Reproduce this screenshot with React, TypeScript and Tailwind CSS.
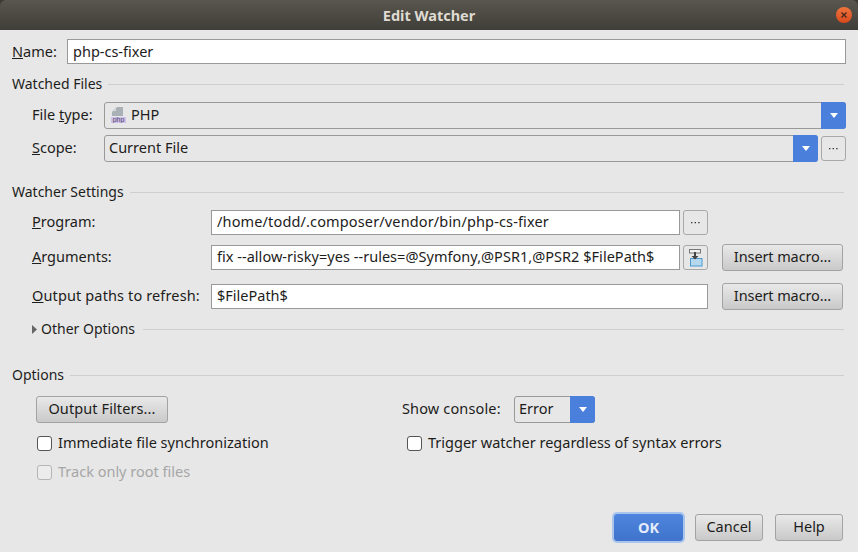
const font = "font-['Noto_Sans',sans-serif]";

const Caret = () => (
  <svg width="10" height="7" viewBox="0 0 10 7">
    <path d="M1 1h8L5 6z" fill="#fff" />
  </svg>
);

const Section = ({ title, className }: { title: string; className: string }) => (
  <div className={`flex h-[18px] items-center pr-[2px] ${className}`}>
    <span className="text-[14px] text-[#1d1d1b]">{title}</span>
    <div className="ml-[6px] h-px flex-1 bg-[#cfcfcf]" />
  </div>
);

const TextInput = ({ value, className, pad = "pb-[3px]" }: { value: string; className: string; pad?: string }) => (
  <div className={`flex h-[25px] items-center border border-[#999] bg-white pl-[5px] text-[#1d1d1b] whitespace-nowrap ${pad} ${className}`}>
    {value}
  </div>
);

const Combo = ({ children, className }: { children: React.ReactNode; className: string }) => (
  <div className={`flex h-[27px] items-stretch rounded-[3px] border border-[#999] ${className}`}>
    <div className="flex flex-1 items-center pb-[3px] pl-[4px] text-[#1d1d1b]">{children}</div>
    <div className="-my-px -mr-px flex w-[25px] items-center justify-center rounded-r-[3px] bg-[#4a7fdb]">
      <Caret />
    </div>
  </div>
);

const Button = ({ label, className }: { label: string; className: string }) => (
  <div className={`flex h-[27px] items-center justify-center rounded-[3px] border border-[#a3a3a3] bg-gradient-to-b from-[#e9e9e9] to-[#c9c9c9] pb-[3px] text-[#1d1d1b] ${className}`}>
    {label}
  </div>
);

const SmallButton = ({ children }: { children: React.ReactNode }) => (
  <div className="ml-[3px] flex h-[25px] w-[25px] items-center justify-center rounded-[3px] border border-[#a8a8a8] text-[#333]">
    {children}
  </div>
);

const Dots = () => (
  <svg width="9" height="3" viewBox="0 0 9 3">
    <path d="M0 1h1.4v1.2H0zM3.6 1H5v1.2H3.6zM7.2 1h1.4v1.2H7.2z" fill="#333" />
  </svg>
);

const Check = ({ label, disabled }: { label: string; disabled?: boolean }) => (
  <div className={`flex h-[18px] items-center ${disabled ? "text-[#a6a6a6]" : "text-[#1d1d1b]"}`}>
    <div className={`h-[15px] w-[15px] rounded-[3px] border ${disabled ? "border-[#b5b5b5] bg-[#ececec]" : "border-[#555] bg-white"}`} />
    <span className="ml-[6px] -translate-y-[1px]">{label}</span>
  </div>
);

const Label = ({ children, className }: { children: React.ReactNode; className: string }) => (
  <span className={`-translate-y-[2px] text-[#1d1d1b] ${className}`}>{children}</span>
);

const PhpIcon = () => (
  <svg width="15" height="16" viewBox="0 0 15 16" className="ml-[2px] mr-[5px] translate-y-[1px]">
    <path d="M6 0h6v9H1V5z" fill="#a9b1b7" />
    <path d="M5 0v4H1z" fill="#d5d8da" />
    <rect x="0" y="10" width="15" height="6" fill="#cfc0ea" />
    <text x="7.5" y="15" textAnchor="middle" fontSize="7" fill="#4d4668" fontFamily="Liberation Sans">php</text>
  </svg>
);

const MacroIcon = () => (
  <svg width="16" height="18" viewBox="0 0 16 18">
    <rect x="2.5" y="9.5" width="11.5" height="7.5" fill="#b5d8ee" stroke="#4a9ad0" />
    <rect x="1.5" y="0.5" width="11" height="3.5" fill="#f0f0f0" stroke="#777" />
    <path d="M6 3h2v4h2.5L7 10.5 3.5 7H6z" fill="#444" />
  </svg>
);

export default function App() {
  return (
    <div className={`flex h-[552px] w-[858px] flex-col overflow-hidden bg-[#3b3a35] text-[14.5px] leading-[20px] ${font}`}>
      <div className="relative flex h-[30px] shrink-0 items-center justify-center rounded-t-[6px] bg-gradient-to-b from-[#5a564e] to-[#3f3e38]">
        <span className="font-bold text-[#dfdbd2]">Edit Watcher</span>
        <div className="absolute right-[6px] top-[7px] flex h-[16px] w-[16px] items-center justify-center rounded-full bg-gradient-to-b from-[#f0743c] to-[#d9481c]">
          <svg width="8" height="8" viewBox="0 0 8 8">
            <path d="M1.5 1.5l5 5M6.5 1.5l-5 5" stroke="#43281c" strokeWidth="1.3" />
          </svg>
        </div>
      </div>

      <div className="flex flex-1 flex-col bg-[#e7e7e7] pl-3 pr-3">
        <div className="mt-[9px] flex h-[25px] items-center">
          <span className="w-[55px] -translate-y-[1px] text-[#1d1d1b]"><u>N</u>ame:</span>
          <TextInput value="php-cs-fixer" className="flex-1" pad="pb-[2px]" />
        </div>

        <Section title="Watched Files" className="mt-[11px]" />

        <div className="mt-[9px] flex items-center pl-5">
          <Label className="w-[72px]">File <u>t</u>ype:</Label>
          <Combo className="flex-1">
            <PhpIcon />
            PHP
          </Combo>
        </div>
        <div className="mt-[6px] flex items-center pl-5">
          <Label className="w-[72px]"><u>S</u>cope:</Label>
          <Combo className="flex-1">Current File</Combo>
          <SmallButton><Dots /></SmallButton>
        </div>

        <Section title="Watcher Settings" className="mt-[21px]" />

        <div className="mt-[9px] flex items-center pl-5">
          <Label className="w-[179px]"><u>P</u>rogram:</Label>
          <TextInput value="/home/todd/.composer/vendor/bin/php-cs-fixer" className="w-[469px] tracking-[0.14px]" />
          <SmallButton><Dots /></SmallButton>
        </div>
        <div className="mt-[9px] flex items-center pl-5">
          <Label className="w-[179px]"><u>A</u>rguments:</Label>
          <TextInput value="fix --allow-risky=yes --rules=@Symfony,@PSR1,@PSR2 $FilePath$" className="w-[469px] overflow-hidden tracking-[0.03px]" />
          <SmallButton><MacroIcon /></SmallButton>
          <Button label="Insert macro..." className="ml-[14px] w-[121px] tracking-[-0.1px]" />
        </div>
        <div className="mt-[12px] flex items-center pl-5">
          <Label className="w-[179px] whitespace-nowrap tracking-[0.13px]"><u>O</u>utput paths to refresh:</Label>
          <TextInput value="$FilePath$" className="w-[497px]" />
          <Button label="Insert macro..." className="ml-[14px] w-[121px] tracking-[-0.1px]" />
        </div>

        <div className="mt-[10px] flex h-[18px] items-center pl-5 pr-[2px]">
          <svg width="5" height="9" viewBox="0 0 5 9" className="mr-[4px]">
            <path d="M0 0l5 4.5L0 9z" fill="#666" />
          </svg>
          <span className="text-[14px] text-[#1d1d1b]">Other Options</span>
          <div className="ml-[8px] h-px flex-1 bg-[#cfcfcf]" />
        </div>

        <Section title="Options" className="mt-[28px]" />

        <div className="mt-[12px] flex items-center pl-6">
          <Button label="Output Filters..." className="w-[132px] tracking-[0.1px]" />
          <Label className="ml-[234px] w-[112px] tracking-[0.15px]">Show console:</Label>
          <Combo className="w-[81px]">Error</Combo>
        </div>
        <div className="mt-[11px] flex pl-[25px]">
          <div className="w-[370px]">
            <Check label="Immediate file synchronization" />
          </div>
          <Check label="Trigger watcher regardless of syntax errors" />
        </div>
        <div className="mt-[11px] pl-[25px]">
          <Check label="Track only root files" disabled />
        </div>

        <div className="mt-auto mb-[11px] flex justify-end pr-[3px]">
          <div className="flex h-[27px] w-[69px] items-center justify-center rounded-[3px] bg-gradient-to-b from-[#4f85de] to-[#3f73cc] pb-[2px] font-bold text-[#e4ecfa] ring-2 ring-[#a9c5ee]">
            OK
          </div>
          <Button label="Cancel" className="ml-[12px] w-[68px]" />
          <Button label="Help" className="ml-[12px] w-[68px]" />
        </div>
      </div>
    </div>
  );
}
